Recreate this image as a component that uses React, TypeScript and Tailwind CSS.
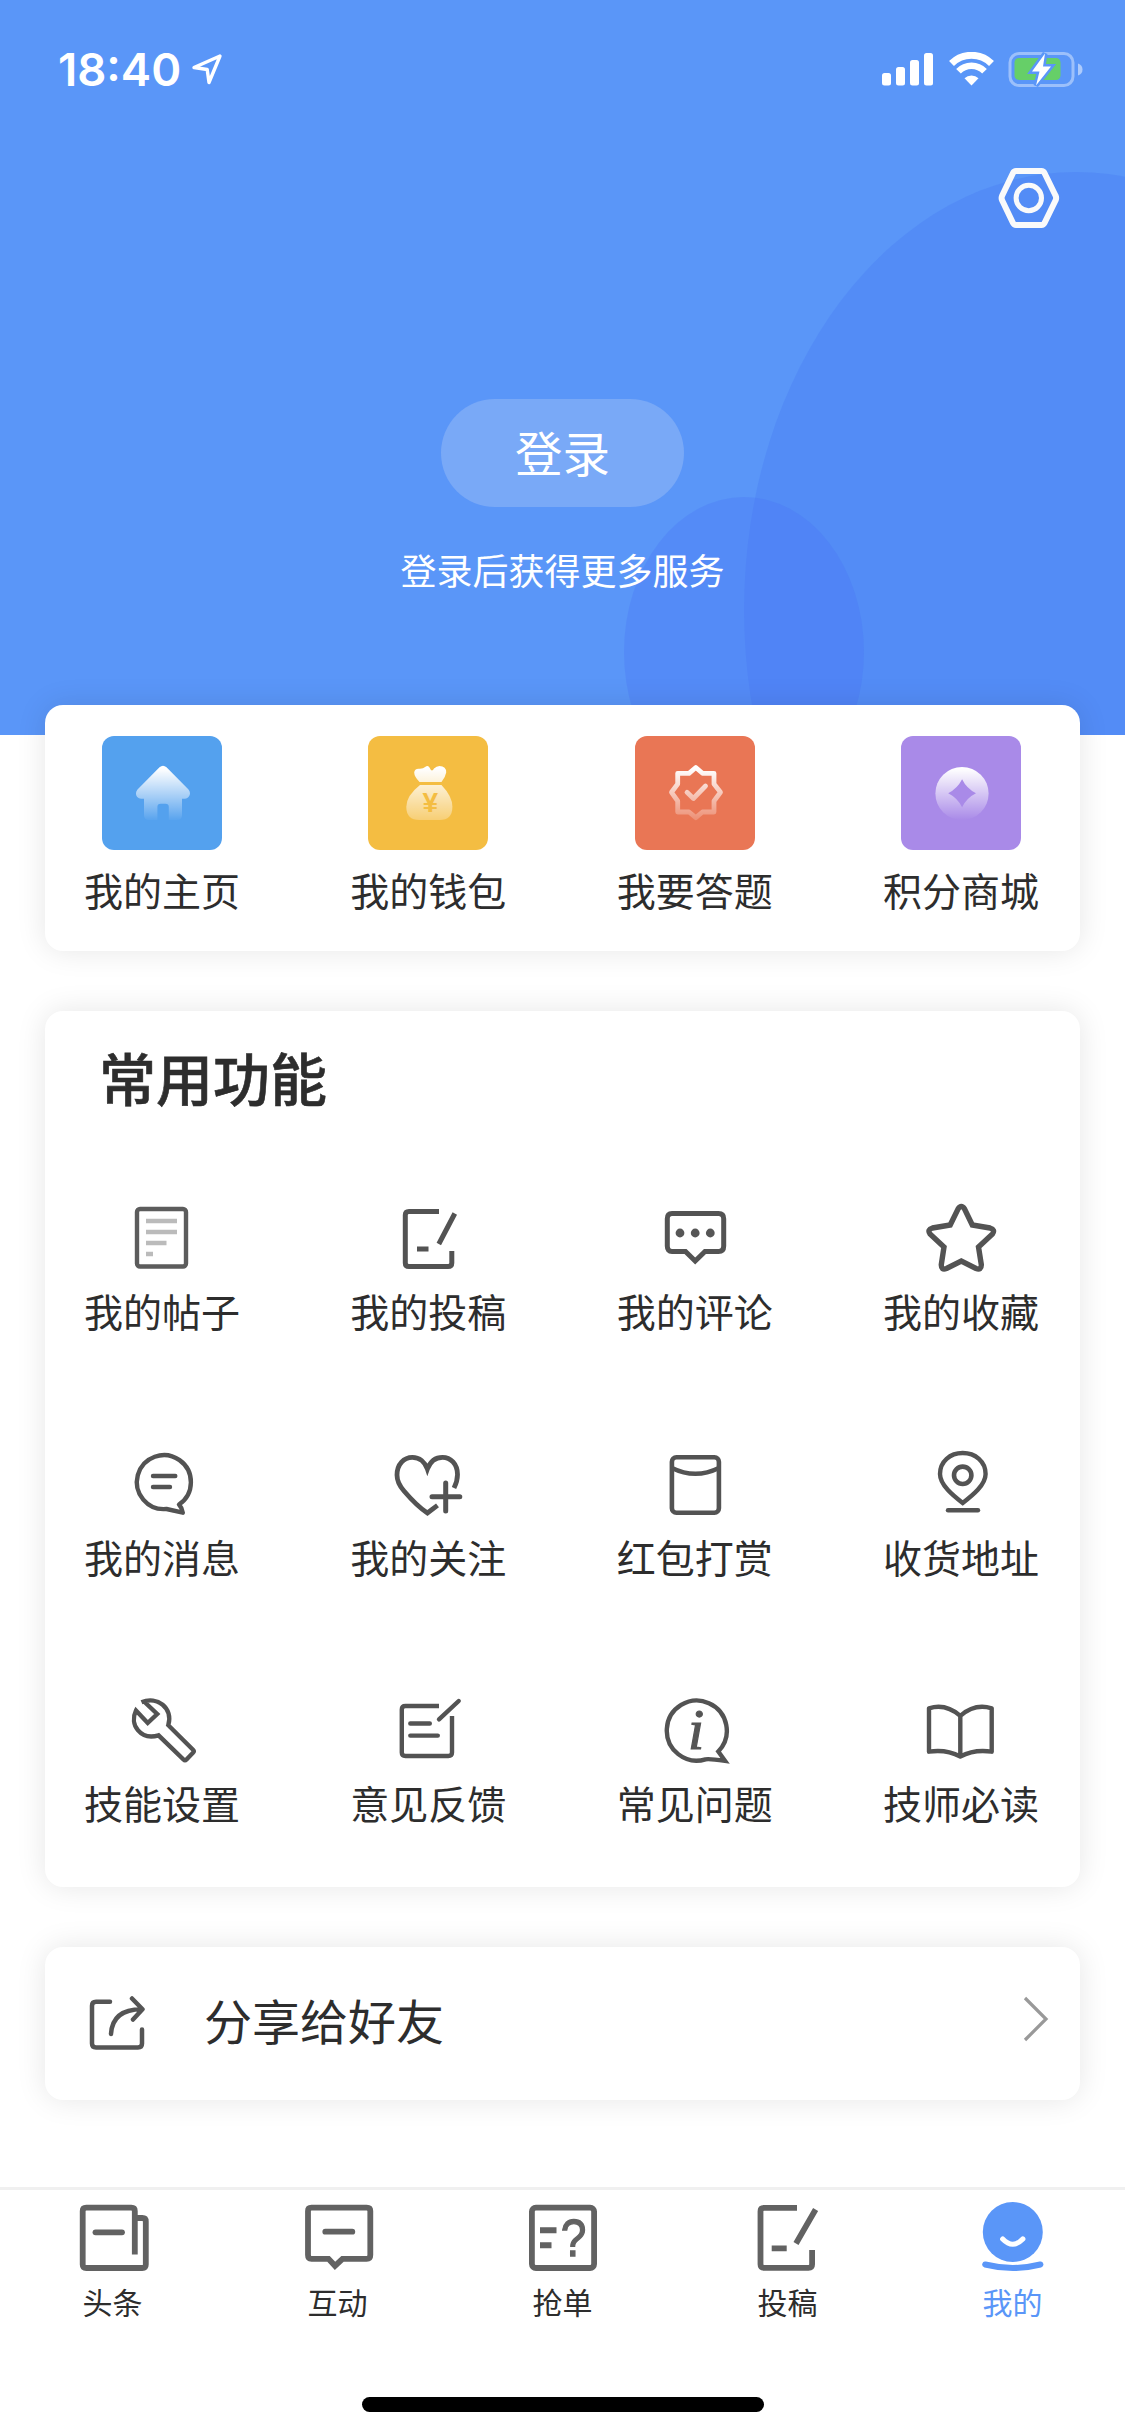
import React from 'react';

// --- Status bar ---

const StatusBar = () => (
  <div className="flex h-[138px] items-start justify-between pl-[58px] pr-[41px] pt-[52px] text-white">
    <div className="flex items-start">
      <span className="w-[120px] whitespace-nowrap font-['Inter'] text-[45.5px] font-semibold leading-[35px]">18:40</span>
      <svg className="ml-[12px] mt-px h-[34px] w-[36px]" viewBox="0 0 36 34" fill="none" stroke="currentColor" strokeWidth="3.4" strokeLinejoin="round">
        <path d="M30 3 L4 14.5 L17.2 16.5 L19 29.5 Z" />
      </svg>
    </div>
    <div className="flex items-start">
      <svg className="h-[34px] w-[52px]" viewBox="0 0 52 34" fill="currentColor">
        <rect x="0" y="21" width="9" height="12.5" rx="2.5" />
        <rect x="14" y="15" width="9" height="18.5" rx="2.5" />
        <rect x="28" y="8" width="9" height="25.5" rx="2.5" />
        <rect x="42" y="1" width="9" height="32.5" rx="2.5" />
      </svg>
      <svg className="ml-[14px] h-[34px] w-[47px]" viewBox="0 0 47 34" fill="none" stroke="currentColor">
        <path d="M3.5 11.5 A28.5 28.5 0 0 1 43.5 11.5" strokeWidth="7" />
        <path d="M10.5 19.3 A18 18 0 0 1 36.5 19.3" strokeWidth="6.5" />
        <path d="M23.5 33.5 L16.5 26.3 A10 10 0 0 1 30.5 26.3 Z" fill="currentColor" stroke="none" />
      </svg>
      <svg className="ml-[13px] h-[36px] w-[76px]" viewBox="0 0 76 36" fill="none">
        <rect x="2" y="1.5" width="63" height="32" rx="9" stroke="white" strokeOpacity="0.4" strokeWidth="3" />
        <path d="M70 11.5 Q74.5 13 74.5 17.5 Q74.5 22 70 23.5 Z" fill="white" fillOpacity="0.5" />
        <rect x="6.5" y="6" width="46" height="22" rx="4.5" fill="#66cf68" />
        <path
          d="M37 1.5 L24 19.5 H31.5 L28 33.5 L43 14.5 H35 Z"
          fill="white"
          stroke="#5a96f8"
          strokeWidth="5"
          className="[paint-order:stroke]"
        />
      </svg>
    </div>
  </div>
);

// --- Coloured shortcut icons, 120x114 ---

const Fade = ({ id, end }: { id: string; end: number }) => (
  <defs>
    <linearGradient id={id} gradientUnits="userSpaceOnUse" x1="0" y1="30" x2="0" y2="84">
      <stop offset="0.05" stopColor="white" />
      <stop offset="1" stopColor="white" stopOpacity={end} />
    </linearGradient>
  </defs>
);

const shortcuts = [
  {
    label: '我的主页',
    bg: 'bg-[#54a1ee]',
    icon: (
      <>
        <Fade id="home" end={0.03} />
        <path
          fill="url(#home)"
          d="M57.5 31.3 Q61 28.3 64.5 31.3 L86.5 53.5 Q89.5 57.5 86.5 61 Q85.2 62.7 83 62.7 H80 V79 Q80 84 75 84 H66.8 V71 Q66.8 67.7 63.5 67.7 H58.7 Q55.4 67.7 55.4 71 V84 H47 Q42 84 42 79 V62.7 H39 Q36.8 62.7 35.2 61 Q32.5 57.5 35.5 53.5 Z"
        />
      </>
    ),
  },
  {
    label: '我的钱包',
    bg: 'bg-[#f4bd42]',
    icon: (
      <>
        <Fade id="wallet" end={0.27} />
        <path
          fill="url(#wallet)"
          d="M51.5 46 Q46.2 40.5 46.2 36.5 Q46.5 32.5 51 32.7 Q55 33 57.5 30.8 Q59.5 29 61.5 31.5 Q62.8 34.5 64 34.5 Q65 34.5 66 32.5 Q68.5 30 71.5 30 Q78.3 30 78.2 36.5 Q77.5 41 73.5 46 Z"
        />
        <path
          fill="url(#wallet)"
          d="M52 49 H73.5 Q84.4 60.5 84.4 70.7 Q84.4 84 71.5 84 H51.5 Q38.3 84 38.3 70.7 Q38.5 59.5 52 49 Z"
        />
        <text x="62.2" y="76" textAnchor="middle" fill="#f4bd42" className="font-['Liberation_Sans'] text-[28px] font-bold">¥</text>
      </>
    ),
  },
  {
    label: '我要答题',
    bg: 'bg-[#e97655]',
    icon: (
      <>
        <Fade id="quiz" end={0.18} />
        <g fill="none" stroke="url(#quiz)" strokeWidth="4.8" strokeLinejoin="round" strokeLinecap="round">
          <path d="M60.8 31.5 L67.5 37.3 H79 V48 L85.5 56.3 L79 65 V76 H67.5 L60.8 81.7 L54 76 H42.7 V65 L36.5 56.3 L42.7 48 V37.3 H54 Z" />
          <path d="M52 56.3 L58.4 62.5 L70.5 50" />
        </g>
      </>
    ),
  },
  {
    label: '积分商城',
    bg: 'bg-[#a98ae8]',
    icon: (
      <>
        <Fade id="mall" end={0} />
        <circle cx="61" cy="57.5" r="26.6" fill="url(#mall)" />
        <path d="M61.1 43.3 Q65.5 52.5 75 57.3 Q65.5 62 61.1 71.3 Q56.5 62 47.2 57.3 Q56.5 52.5 61.1 43.3 Z" fill="#a98ae8" />
      </>
    ),
  },
];

// --- Outline feature icons, 72x72 ---

const features = [
  [
    {
      label: '我的帖子',
      icon: (
        <>
          <rect x="11" y="8" width="49" height="57.5" rx="3" stroke="#5c5c5c" />
          <path d="M20 20 H51 M20 31 H51 M20 42 H40.5 M20 53 H27" stroke="#bbbbbb" />
        </>
      ),
    },
    {
      label: '我的投稿',
      icon: (
        <path
          strokeWidth="5"
          d="M47 10.5 H17 Q13.3 10.5 13.3 14 V62 Q13.3 65.5 17 65.5 H56 Q59.8 65.5 59.8 62 V50 M62.8 12.5 L46.8 43 M25 48 H36.5"
        />
      ),
    },
    {
      label: '我的评论',
      icon: (
        <>
          <path
            strokeWidth="5"
            d="M13 12.5 H59.5 Q64.7 12.5 64.7 17.7 V45 Q64.7 50.5 59.5 50.5 H46 L36.2 60 L26.5 50.5 H13 Q8.3 50.5 8.3 45 V17.7 Q8.3 12.5 13 12.5 Z"
          />
          <g fill="#565656" stroke="none">
            <circle cx="21" cy="32" r="4.4" />
            <circle cx="36.2" cy="32" r="4.4" />
            <circle cx="51.3" cy="32" r="4.4" />
          </g>
        </>
      ),
    },
    {
      label: '我的收藏',
      icon: (
        <path
          strokeWidth="5.4"
          d="M33 8 Q36.3 3 39.6 8 L47.3 24 L65 27 Q70.5 28.8 67.5 33 L53.5 46 L56.3 63.5 Q56.5 69.5 51 67.5 L36.3 60 L21.5 67.5 Q16 69.5 16.3 63.5 L19 46 L5 33 Q2 28.8 7.5 27 L25.2 24 Z"
        />
      ),
    },
  ],
  [
    {
      label: '我的消息',
      icon: (
        <g strokeLinecap="round" strokeLinejoin="round">
          <path d="M53 57.5 A27 27 0 1 0 40.5 62 L56.8 65.7 Q56.2 61 53 57.5 Z" />
          <path d="M27 29 H49.3 M27 40 H44" />
        </g>
      ),
    },
    {
      label: '我的关注',
      icon: (
        <>
          <path
            strokeWidth="4.8"
            d="M62 41 C64.5 36 65.5 32 65.5 27.5 C65.5 17 58.5 10.3 50.5 10.3 C43 10.3 38 15 35.4 22 C33 15 27.5 10.3 20.4 10.3 C12 10.3 5 17 5 28 C5 35 8.5 40 12 44 C18 51 27 60.5 35.4 66 L45.5 58.3"
          />
          <path strokeWidth="5" strokeLinecap="round" d="M40 49.7 H67.8 M53.7 36 V64" />
        </>
      ),
    },
    {
      label: '红包打赏',
      icon: (
        <>
          <rect x="12.9" y="10.2" width="47" height="55.6" rx="4.5" strokeWidth="4.6" />
          <path strokeWidth="4.6" d="M12.9 21 Q36.4 32.5 59.9 21" />
        </>
      ),
    },
    {
      label: '收货地址',
      icon: (
        <>
          <path d="M37.7 56 C28 48.5 15 38 15 27 C15 14.5 25 6 37.7 6 C50.4 6 60.6 14.5 60.6 27 C60.6 38 47.4 48.5 37.7 56 Z" />
          <circle cx="37.7" cy="28.3" r="8.7" strokeWidth="4.6" />
          <path strokeLinecap="round" d="M23 63.3 H53" />
        </>
      ),
    },
  ],
  [
    {
      label: '技能设置',
      icon: (
        <path d="M15.5 9.3 C31 2.5 47.5 15 42.3 32.2 L67 56.8 Q68.5 58.3 67 59.8 L60.5 66.5 Q59 68 57.5 66.5 L32.5 42.3 C14.5 47.5 3 31.5 10 17.5 L21.7 30 L31.2 21 L17.5 8" />
      ),
    },
    {
      label: '意见反馈',
      icon: (
        <>
          <path d="M47 13 H13.5 Q9.8 13 9.8 16.5 V59.5 Q9.8 63 13.5 63 H56.3 Q60 63 60 59.5 V23" />
          <path strokeLinecap="round" d="M66.7 8 L47 26.3 M18.3 30.5 H37.8 M18.3 42.6 H45.8" />
        </>
      ),
    },
    {
      label: '常见问题',
      icon: (
        <>
          <path d="M59.3 58.5 A30 30 0 1 0 46.5 66.3 Q50 65.5 66 67.8 Z" />
          <text x="29" y="56" fill="#555555" stroke="#555555" strokeWidth="1.2" className="font-['Liberation_Serif'] text-[58px] italic">i</text>
        </>
      ),
    },
    {
      label: '技师必读',
      icon: (
        <path
          strokeLinejoin="round"
          d="M35.3 22.8 Q20.5 10 4 15.3 V58.7 Q21 56 35.3 63.5 Q49.5 56 66.7 58.7 V15.3 Q50 10 35.3 22.8 V63.5"
        />
      ),
    },
  ],
];

// --- Bottom tabs ---

const tabs = [
  {
    label: '头条',
    icon: (
      <>
        <path d="M57.8 52.5 V9 Q57.8 5.6 54.3 5.6 H9.3 Q5.7 5.6 5.7 9 V62.5 Q5.7 66 9.3 66 H65.3 Q68.8 66 68.8 62.5 V19.5 Q68.8 16 65.3 16 H57.8" />
        <path strokeLinecap="round" d="M18.5 30.3 H45" />
      </>
    ),
  },
  {
    label: '互动',
    icon: (
      <>
        <path d="M9.5 5.6 H64.7 Q68.3 5.6 68.3 9 V53 Q68.3 56.8 64.7 56.8 H40.5 L33 63.8 L26.5 56.8 H9.5 Q6 56.8 6 53 V9 Q6 5.6 9.5 5.6 Z" />
        <path strokeLinecap="round" d="M23.3 29.7 H50.3" />
      </>
    ),
  },
  {
    label: '抢单',
    icon: (
      <>
        <rect x="4.9" y="5.6" width="62.2" height="60.4" rx="4" />
        <path d="M13 28.3 H29.5 M13 43.3 H24.5" strokeWidth="6" />
        <text
          x="46.5"
          y="54.5"
          textAnchor="middle"
          fill="#626262"
          stroke="#626262"
          strokeWidth="1.3"
          className="origin-[46.5px_50%] scale-x-90 font-['Liberation_Sans'] text-[51px]"
        >
          ?
        </text>
      </>
    ),
  },
  {
    label: '投稿',
    icon: (
      <>
        <path d="M45 5.8 H12 Q8.5 5.8 8.5 9.3 V62.3 Q8.5 65.8 12 65.8 H56.5 Q60.1 65.8 60.1 62.3 V48" />
        <path d="M63.6 7.5 L44 41.5 M19.7 46.3 H34.7" />
      </>
    ),
  },
  {
    label: '我的',
    active: true,
    icon: (
      <>
        <circle cx="35.8" cy="30" r="30" fill="#5a96f8" stroke="none" />
        <path d="M25.7 37 Q35.8 47.5 45.8 37" stroke="white" strokeWidth="5.2" strokeLinecap="round" />
        <path d="M8.2 62.5 Q35.8 69.5 63.4 62.5" stroke="#5a96f8" strokeWidth="6" strokeLinecap="round" />
      </>
    ),
  },
];

const Card = ({ children, className = '' }: { children: React.ReactNode; className?: string }) => (
  <section className={`relative mx-[45px] rounded-[18px] bg-white shadow-[0_0_30px_rgba(0,0,0,0.1)] ${className}`}>
    {children}
  </section>
);

// --- Main Page ---

export default function App() {
  return (
    <div className="flex h-[2436px] w-[1125px] flex-col overflow-hidden bg-white font-['Noto_Sans_CJK_SC',sans-serif] text-[#2d2d2d]">
      <header className="relative h-[735px] shrink-0 overflow-hidden bg-[#5a96f8]">
        {/* Decorative bubbles */}
        <div className="absolute left-[744px] top-[172px] h-[876px] w-[664px] rounded-[50%] bg-[#4b80f4]/45" />
        <div className="absolute left-[624px] top-[497px] h-[310px] w-[240px] rounded-[50%] bg-[#4a74f4]/30" />

        <div className="relative">
          <StatusBar />
          <div className="flex justify-end pr-[64px] pt-[28px]">
            <svg className="h-[64px] w-[64px]" viewBox="0 0 64 64" fill="none" stroke="#fafafa">
              <path
                strokeWidth="6"
                strokeLinejoin="round"
                d="M19 5 H44.5 Q46.5 5 47.5 7 L58.5 29.5 Q59.8 32 58.5 34.5 L47.5 57 Q46.5 59 44.5 59 H19 Q17 59 16 57 L5.2 34.5 Q4 32 5.2 29.5 L16 7 Q17 5 19 5 Z"
              />
              <circle cx="31.8" cy="32" r="12.7" strokeWidth="5" />
            </svg>
          </div>
          <div className="mt-[169px] flex flex-col items-center text-white">
            <button className="h-[108px] w-[243px] rounded-full bg-[#f5f5f5]/20 pb-[3px] text-[47.5px] leading-[70px]">登录</button>
            <p className="mt-[37px] text-[36px] leading-[50px]">登录后获得更多服务</p>
          </div>
        </div>
      </header>

      <Card className="-mt-[30px] flex h-[246px] shrink-0 justify-between pl-[39px] pr-[41px] pt-[31px]">
        {shortcuts.map((item) => (
          <div key={item.label} className="flex w-[156px] flex-col items-center">
            <div className={`h-[114px] w-[120px] rounded-[12px] ${item.bg}`}>
              <svg className="h-[114px] w-[120px]" viewBox="0 0 120 114">{item.icon}</svg>
            </div>
            <span className="mt-[12px] whitespace-nowrap text-[39px] leading-[54px]">{item.label}</span>
          </div>
        ))}
      </Card>

      <Card className="mt-[60px] h-[876px] shrink-0 pl-[39px] pr-[41px] pt-[25px]">
        <h2 className="pl-[15px] text-[57px] font-medium leading-[80px] [-webkit-text-stroke:0.6px_#2d2d2d]">常用功能</h2>
        <div className="mt-[85px] flex flex-col gap-[109px]">
          {features.map((row, i) => (
            <div key={i} className="flex justify-between">
              {row.map((item) => (
                <div key={item.label} className="flex w-[156px] flex-col items-center">
                  <svg className="h-[72px] w-[72px]" viewBox="0 0 72 72" fill="none" stroke="#535353" strokeWidth="4.4">
                    {item.icon}
                  </svg>
                  <span className="mb-px mt-[10px] whitespace-nowrap text-[39px] leading-[54px]">{item.label}</span>
                </div>
              ))}
            </div>
          ))}
        </div>
      </Card>

      <Card className="mt-[60px] flex h-[153px] shrink-0 items-center pl-[42px] pr-[30px]">
        <svg className="h-[60px] w-[60px]" viewBox="0 0 60 60" fill="none" stroke="#555555" strokeWidth="4.5" strokeLinecap="round" strokeLinejoin="round">
          <path d="M23 7.7 H9 Q5 7.7 5 11.7 V49.5 Q5 53.5 9 53.5 H51 Q55 53.5 55 49.5 V35.5" />
          <path d="M24 40 C25 24 35 15.3 54.5 15.3 M45 4.5 L55.5 15.3 L46 25.5" />
        </svg>
        <span className="mb-[9px] ml-[57px] text-[48px] leading-[70px]">分享给好友</span>
        <svg className="mb-[9px] ml-auto h-[46px] w-[28px]" viewBox="0 0 28 46" fill="none" stroke="#999999" strokeWidth="3.2">
          <path d="M3 2 L24 23 L3 44" />
        </svg>
      </Card>

      <nav className="mt-[87px] flex shrink-0 border-t-[3px] border-[#f0f0f0] pt-[12px]">
        {tabs.map((tab) => (
          <div key={tab.label} className="flex flex-1 flex-col items-center">
            <svg className="h-[72px] w-[72px]" viewBox="0 0 72 72" fill="none" stroke="#626262" strokeWidth="5.8">
              {tab.icon}
            </svg>
            <span className={`mt-[7px] text-[30px] leading-[40px] ${tab.active ? 'text-[#5a96f8]' : ''}`}>{tab.label}</span>
          </div>
        ))}
      </nav>

      {/* Home indicator */}
      <div className="mx-auto mb-[24px] mt-auto h-[15px] w-[402px] shrink-0 rounded-full bg-black" />
    </div>
  );
}
